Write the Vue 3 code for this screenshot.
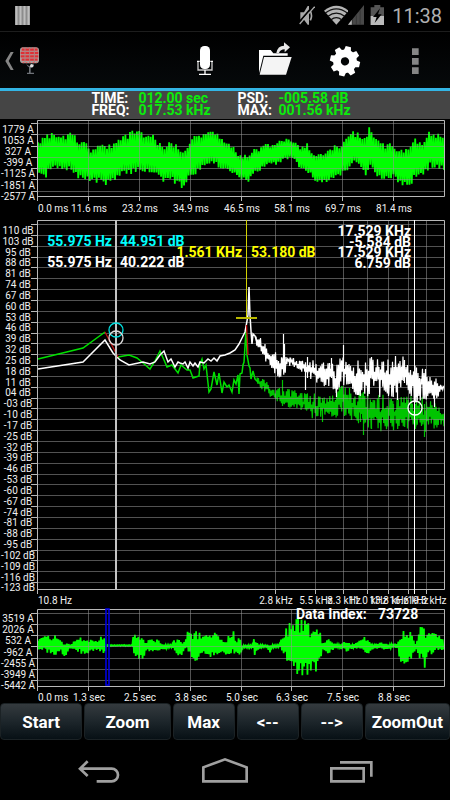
<template>
  <div class="screen">
    <header class="status-bar">
      <svg class="bars" width="16" height="22" viewBox="0 0 16 22">
        <rect y="1" width="15" height="19" fill="#8c8c8c" />
        <path d="M1.5 1v19M5.5 1v19M9.5 1v19M13.5 1v19" stroke="#bdbdbd" stroke-width="2" />
      </svg>
      <svg class="mute" width="16" height="22" viewBox="225 15 48 66">
        <path d="M229 37h11l11-19h4v56h-4l-11-15h-11z" fill="#aaa" />
        <path d="M259 33q7 14 0 28" fill="none" stroke="#aaa" stroke-width="5" />
        <path d="M224 68L268 17" stroke="#000" stroke-width="5" />
        <path d="M227 72L272 20" stroke="#aaa" stroke-width="4" />
      </svg>
      <svg width="24" height="22" viewBox="300 15 72 66">
        <path d="M337 74L300 32Q337 3 374 32z" fill="#b4b4b4" />
        <path d="M304 39q33-25 66 0M312 49q25-19 50 0M321 59q16-12 32 0" fill="none" stroke="#111" stroke-width="4" />
      </svg>
      <svg class="signal" width="16" height="22" viewBox="370 15 50 66">
        <path d="M370 75L420 14V75z" fill="#484848" />
        <path d="M370 75L382 60V75z" fill="#b4b4b4" />
        <path d="M384 60v15M396 46v29M408 30v45" stroke="#2c2c2c" stroke-width="2" />
      </svg>
      <svg width="15" height="22" viewBox="438 15 45 66">
        <path d="M440 22h11v-7h18v7h11v53h-40z" fill="#555" />
        <path d="M440 48h40v27h-40z" fill="#bbb" />
        <path d="M468 25L447 51h11l-6 18 21-26h-11z" fill="#000" />
      </svg>
      <time class="clock">11:38</time>
    </header>

    <nav class="action-bar">
      <button class="up" aria-label="Back">
        <svg width="12" height="36" viewBox="12 126 36 108">
          <path d="M41 156h-9L16 183l16 27h9L26 183z" fill="#858585" />
        </svg>
        <svg width="22" height="36" viewBox="54 126 66 108">
          <rect x="60" y="142" width="57" height="48" rx="9" fill="#aaa09e" />
          <path d="M65 149h48M62 159h53M62 169h53M65 179h48" stroke="#df2f35" stroke-width="7" />
          <path d="M75 143v46M89 143v46M103 143v46" stroke="#b08080" stroke-width="3" />
          <path d="M66 144h46M68 188h42" stroke="#ef5050" stroke-width="3" stroke-dasharray="4 6" />
          <path d="M79 192q10 12 23 0v6q-4 6-10 6v14h10v4H81v-4h6v-16q-6-3-8-10z" fill="#6e7278" />
          <circle cx="95" cy="197" r="5" fill="#ddd" />
        </svg>
      </button>
      <button class="action" aria-label="Record">
        <svg width="36" height="36" viewBox="561 126 108 108">
          <rect x="600" y="138" width="30" height="69" rx="13" fill="#fff" />
          <path d="M594 183v27h42v-27" fill="none" stroke="#ccc" stroke-width="4" />
          <path d="M591 184h8M631 184h8M597 223h36M615 210v12" stroke="#fff" stroke-width="4" />
        </svg>
      </button>
      <button class="action" aria-label="Open file">
        <svg width="36" height="36" viewBox="99 126 108 108">
          <path d="M105 150h35l8 10h43v7h-73l-13 53z" fill="#fff" />
          <path d="M120 171h83l-17 53h-79z" fill="#f4f4f4" />
          <path d="M157 159q4-22 23-22v-10l18 15-16 15v-9q-13 0-17 11z" fill="#e8e8e8" />
        </svg>
      </button>
      <button class="action" aria-label="Settings">
        <svg width="36" height="36" viewBox="306 126 108 108">
          <g transform="translate(360 184) rotate(13)" fill="#fff">
            <path v-for="n in 8" :key="n" d="M-11-30L-8-45H8L11-30z" :transform="`rotate(${n * 45})`" />
            <circle r="24" fill="none" stroke="#fff" stroke-width="23" />
          </g>
        </svg>
      </button>
      <button class="action" aria-label="More">
        <svg width="36" height="36" viewBox="516 126 108 108">
          <path d="M561 145h20v20h-20zM561 174h20v20h-20zM561 202h20v20h-20z" fill="#858585" />
        </svg>
      </button>
    </nav>

    <dl class="readout">
      <template v-for="item in readout" :key="item.label">
        <dt>{{ item.label }}</dt>
        <dd>{{ item.value }}</dd>
      </template>
    </dl>

    <main>
      <svg class="chart" viewBox="0 0 450 99">
        <path class="trace" :d="wavePath" />
        <path class="grid" :d="gridPath(waveRows, waveCols, 1, 77)" />
        <path class="frame" :d="framePath(1, 77, waveRows, waveCols)" />
        <text v-for="(label, i) in waveLevels" :key="label" class="tick mid" x="18" :y="14 + Math.round(i * 11.1)">{{ label }}</text>
        <text class="tick" x="38" y="93">0.0 ms</text>
        <text v-for="(label, i) in waveTimes" :key="label" class="tick mid" :x="waveCols[i] + 1" y="93">{{ label }}</text>
      </svg>

      <svg class="chart" viewBox="0 0 450 389">
        <path class="trace noise" :d="greenNoise" />
        <path class="grid" :d="gridPath(specRows, specCols, 2, 371)" />
        <path class="trace spectrum" :d="greenLine" />
        <path class="white" :d="whiteNoise" />
        <path class="white line" :d="whiteLine" />
        <path d="M105 114L118 139M246.500 107L248 137" class="peak" />
        <path class="frame" :d="framePath(2, 371, specRows, specCols)" />

        <path d="M116 2V371" stroke="#c4c4c4" stroke-width="2" />
        <path d="M414.500 2V376" stroke="#fff" />
        <path d="M246.500 2V99" stroke="#d2d200" />
        <path d="M236 100H257" stroke="#b9b900" stroke-width="2" />
        <circle cx="116" cy="112" r="7" stroke="#00dede" />
        <circle cx="116" cy="120" r="7" stroke="#ddd" />
        <circle cx="415" cy="190" r="7" stroke="#fff" />

        <g class="marker cyan">
          <text class="end" x="112" y="28">55.975 Hz</text>
          <text x="120" y="28">44.951 dB</text>
        </g>
        <g class="marker">
          <text class="end" x="112" y="49">55.975 Hz</text>
          <text x="120" y="49">40.222 dB</text>
        </g>
        <g class="marker yellow">
          <text class="end" x="242" y="39">1.561 KHz</text>
          <text x="251" y="39">53.180 dB</text>
        </g>
        <g class="marker end">
          <text x="411" y="18">17.529 KHz</text>
          <text x="411" y="29">-5.584 dB</text>
          <text x="411" y="39">17.529 KHz</text>
          <text x="411" y="50">6.759 dB</text>
        </g>

        <text v-for="(label, i) in specLevels" :key="label" class="tick mid" x="18" :y="16 + Math.round(i * 10.83)">{{ label }} dB</text>
        <text class="tick" x="38" y="386">10.8 Hz</text>
        <text v-for="(label, i) in specFreqs" :key="label" class="tick mid" :x="specCols[i] + 1" y="386">{{ label }} kHz</text>
      </svg>

      <svg class="chart" viewBox="0 0 450 95">
        <path class="trace" :d="overviewPath" />
        <path class="grid" :d="gridPath(overRows, waveCols, 2, 79)" />
        <path class="frame" :d="framePath(2, 79, overRows, waveCols)" />
        <rect x="106" y="2" width="3" height="76" fill="none" stroke="#0000e0" stroke-width="1.6" />
        <g class="marker">
          <text x="296" y="12">Data Index:</text>
          <text x="378" y="12">73728</text>
        </g>
        <text v-for="(label, i) in overLevels" :key="label" class="tick mid" x="18" :y="15 + Math.round(i * 11.2)">{{ label }}</text>
        <text class="tick" x="38" y="94">0.0 ms</text>
        <text v-for="(label, i) in overTimes" :key="label" class="tick mid" :x="waveCols[i] + 1" y="94">{{ label }}</text>
      </svg>
    </main>

    <div class="controls">
      <button v-for="c in controls" :key="c.label" :style="{ flexGrow: c.size }">{{ c.label }}</button>
    </div>

    <nav class="system-nav">
      <button aria-label="Back">
        <svg width="46" height="30" viewBox="231 180 138 90">
          <path d="M266 199L243 221L266 243M243 221H338a19 19 0 0 1 0 38H293" />
        </svg>
      </button>
      <button aria-label="Home">
        <svg width="46" height="30" viewBox="606 180 138 90">
          <path d="M610 259V217L675 193L740 217V259z" />
        </svg>
      </button>
      <button aria-label="Recent apps">
        <svg width="46" height="30" viewBox="309 180 138 90">
          <path d="M319 220h97v39h-97zM345 202h94v43" />
        </svg>
      </button>
    </nav>
  </div>
</template>

<script setup>
const readout = [
  { label: 'TIME:', value: '012.00 sec' },
  { label: 'PSD:', value: '-005.58 dB' },
  { label: 'FREQ:', value: '017.53 kHz' },
  { label: 'MAX:', value: '001.56 kHz' },
]

const controls = [
  { label: 'Start', size: 83 },
  { label: 'Zoom', size: 87 },
  { label: 'Max', size: 62 },
  { label: '<--', size: 62 },
  { label: '-->', size: 62 },
  { label: 'ZoomOut', size: 86 },
]

const LEFT = 37
const RIGHT = 444

const waveLevels = ['1779 A', '1053 A', '327 A', '-399 A', '-1125 A', '-1851 A', '-2577 A']
const waveTimes = ['11.6 ms', '23.2 ms', '34.9 ms', '46.5 ms', '58.1 ms', '69.7 ms', '81.4 ms']
const waveRows = [4, 15, 27, 38, 49, 60, 72]
const waveCols = [88, 139, 190, 241, 291, 342, 393]

const specLevels = [
  '110', '103', '95', '88', '81', '74', '67', '60', '53', '46', '39', '32', '25', '18', '11', '04',
  '-03', '-10', '-17', '-25', '-32', '-39', '-46', '-53', '-60', '-67', '-74', '-81', '-88', '-95',
  '-102', '-109', '-116', '-123',
]
const specFreqs = ['2.8', '5.5', '8.3', '11.0', '13.8', '16.6', '19.3']
const specRows = specLevels.map((_, i) => 6 + Math.round(i * 10.85))
const specCols = [275, 315, 343, 367, 388, 408, 426]

const overLevels = ['3519 A', '2026 A', '532 A', '-962 A', '-2455 A', '-3949 A', '-5442 A']
const overTimes = ['1.3 sec', '2.5 sec', '3.8 sec', '5.0 sec', '6.3 sec', '7.5 sec', '8.8 sec']
const overRows = [6, 17, 28, 39, 51, 62, 73]

const gridPath = (rows, cols, top, bottom) =>
  rows.map(y => `M${LEFT} ${y + 0.5}H${RIGHT}`).join('') +
  cols.map(x => `M${x + 0.5} ${top}V${bottom}`).join('')

const framePath = (top, bottom, rows, cols) =>
  `M${LEFT + 0.5} ${bottom + 5}V${top + 0.5}H${RIGHT + 0.5}V${bottom + 0.5}H${LEFT}` +
  rows.map(y => `M31 ${y + 0.5}H${LEFT}`).join('') +
  cols.map(x => `M${x + 0.5} ${bottom}v5`).join('')

// small LCG so every trace is drawn the same way each time
const makeRandom = (seed) => () => {
  seed = (seed * 1664525 + 1013904223) % 4294967296
  return seed / 4294967296
}

// envelope points: [x, top, bottom]
const envelopeAt = (points, x) => {
  let i = 1
  while (i < points.length - 1 && points[i][0] < x) i++
  const [x0, t0, b0] = points[i - 1]
  const [x1, t1, b1] = points[i]
  const k = Math.min(1, Math.max(0, (x - x0) / (x1 - x0)))
  return [t0 + (t1 - t0) * k, b0 + (b1 - b0) * k]
}

const zigzag = (points, step, jitter, seed) => {
  const random = makeRandom(seed)
  const out = []
  const end = points[points.length - 1][0]
  for (let x = points[0][0]; x < end; x += step) {
    const [top, bottom] = envelopeAt(points, x)
    const slack = (bottom - top) * jitter
    out.push(`${x} ${(top + random() * slack).toFixed(1)}`)
    out.push(`${x + step / 2} ${(bottom - random() * slack).toFixed(1)}`)
  }
  return 'M' + out.join('L')
}

const spikes = (list) => list.map(([x, a, b]) => `M${x + 0.5} ${a}V${b}`).join('')
const polyline = (points) => 'M' + points.map(p => p.join(' ')).join('L')

const wavePath = zigzag([
  [38, 22, 59], [42, 19, 62], [52, 11, 51], [62, 17, 53], [72, 12, 54], [80, 22, 63], [86, 20, 62],
  [89, 29, 63], [95, 28, 65], [100, 23, 64], [104, 26, 66], [112, 24, 65], [120, 16, 59],
  [127, 14, 56], [133, 9, 55], [139, 9, 53], [144, 13, 54], [153, 15, 56], [158, 21, 61],
  [164, 26, 64], [172, 21, 65], [179, 25, 70], [183, 28, 68], [187, 24, 62], [193, 17, 56],
  [201, 16, 52], [210, 9, 43], [217, 12, 49], [225, 20, 51], [232, 26, 56], [239, 35, 61],
  [248, 36, 63], [254, 30, 56], [261, 28, 51], [267, 24, 46], [273, 26, 46], [279, 21, 45],
  [285, 19, 40], [293, 21, 42], [300, 27, 51], [307, 24, 56], [312, 31, 60], [320, 33, 67],
  [326, 32, 64], [333, 26, 61], [340, 25, 57], [346, 18, 52], [353, 12, 46], [360, 14, 49],
  [365, 17, 58], [369, 8, 48], [375, 14, 57], [384, 24, 63], [392, 23, 60], [399, 28, 66],
  [404, 29, 69], [410, 29, 68], [414, 19, 60], [423, 22, 56], [429, 12, 49], [437, 14, 51],
  [444, 18, 53],
], 2.3, 0.16, 7)

const overviewPath = zigzag([
  [38, 33, 43], [42, 29, 44], [48, 28, 47], [55, 28, 50], [60, 31, 45], [64, 35, 51], [68, 36, 42],
  [72, 36, 43], [75, 32, 43], [82, 29, 49], [88, 32, 46], [95, 33, 43], [104, 28, 48], [105, 38, 39],
  [132, 38, 39], [133, 27, 47], [138, 28, 54], [143, 31, 54], [146, 37, 42], [150, 29, 46],
  [155, 35, 44], [158, 31, 46], [165, 38, 42], [172, 38, 40], [175, 31, 48], [180, 32, 50],
  [185, 34, 42], [188, 20, 50], [192, 28, 52], [195, 24, 56], [200, 25, 53], [206, 28, 47],
  [212, 24, 54], [218, 28, 46], [225, 31, 49], [230, 28, 50], [233, 22, 48], [236, 34, 44],
  [239, 26, 52], [242, 38, 41], [252, 38, 41], [254, 30, 49], [258, 37, 42], [266, 38, 40],
  [269, 38, 48], [271, 38, 41], [279, 38, 40], [282, 28, 47], [287, 20, 57], [292, 12, 64],
  [298, 10, 71], [305, 12, 71], [310, 16, 67], [315, 18, 65], [320, 21, 61], [322, 35, 44],
  [328, 29, 48], [334, 37, 41], [340, 36, 42], [347, 33, 45], [352, 38, 41], [358, 33, 43],
  [362, 30, 43], [367, 30, 49], [373, 38, 41], [380, 35, 43], [392, 37, 41], [397, 36, 42],
  [400, 25, 59], [406, 23, 56], [412, 24, 50], [415, 37, 41], [418, 28, 52], [421, 16, 58],
  [425, 22, 63], [428, 18, 48], [433, 23, 49], [437, 28, 43], [440, 28, 47], [444, 32, 46],
], 1.7, 0.28, 21)

const greenLine = polyline([[38, 141], [83, 130], [105, 114]]) + polyline([
  [118, 139], [129, 137], [137, 140], [143, 145], [150, 151], [155, 143], [160, 133], [164, 142],
  [167, 149], [172, 147], [178, 155], [181, 147], [187, 152], [190, 152], [193, 160], [199, 158],
  [200, 146], [202, 141], [204, 151], [206, 147], [209, 174], [211, 171], [214, 154], [217, 167],
  [219, 155], [222, 175], [224, 164], [227, 169], [229, 167], [232, 174], [234, 162], [236, 166],
  [238, 157], [239, 176], [240, 156], [242, 155], [243, 147], [244, 144], [246, 112], [247, 137],
  [249, 148], [250, 150], [251, 161], [253, 153], [255, 161], [258, 164],
])

const greenNoise = zigzag([
  [257, 158, 170], [265, 162, 175], [275, 168, 184], [285, 169, 190], [300, 174, 194],
  [315, 175, 203], [325, 178, 197], [335, 175, 203], [341, 164, 198], [350, 172, 202],
  [360, 173, 208], [370, 174, 212], [385, 177, 214], [400, 176, 214], [414, 176, 216],
  [425, 180, 216], [435, 184, 210], [440, 189, 212], [444, 195, 208],
], 1.4, 0.48, 5) + spikes([
  [282, 162, 188], [322, 180, 204], [341, 168, 190], [349, 170, 192], [360, 175, 204],
  [363, 180, 217], [371, 184, 211], [393, 186, 208], [415, 186, 211], [424, 186, 219],
])

const whiteLine = polyline([
  [38, 151], [83, 144], [105, 122], [113, 135], [120, 142], [129, 147], [143, 144], [150, 146],
  [155, 144], [160, 137], [164, 133], [168, 144], [171, 141], [175, 149], [178, 144], [180, 145],
  [183, 146], [185, 144], [188, 150], [190, 144], [193, 148], [195, 145], [198, 149], [200, 144],
  [204, 145], [208, 141], [211, 143], [214, 140], [217, 143], [220, 138], [225, 137], [230, 135],
  [235, 132], [239, 126], [242, 120], [245, 114], [247, 103], [248, 97], [249, 69], [250, 97],
  [251, 113], [252, 126], [253, 116], [255, 118], [257, 124],
])

const whiteNoise = zigzag([
  [256, 117, 129], [262, 121, 138], [268, 125, 151], [275, 129, 156], [278, 137, 164],
  [283, 134, 164], [286, 135, 147], [295, 140, 151], [305, 143, 157], [315, 142, 168],
  [325, 143, 172], [330, 138, 171], [336, 148, 179], [341, 132, 170], [346, 138, 172],
  [355, 143, 178], [365, 141, 180], [372, 138, 176], [385, 141, 182], [393, 134, 179],
  [400, 142, 180], [404, 136, 176], [412, 144, 184], [418, 150, 186], [421, 146, 182],
  [430, 153, 183], [437, 160, 182], [440, 166, 174], [444, 169, 170],
], 1.5, 0.45, 99) + spikes([
  [283, 116, 145], [284, 126, 146], [305, 150, 172], [307, 139, 160], [336, 160, 179],
  [343, 127, 160], [331, 140, 160], [357, 155, 177], [388, 160, 178], [397, 160, 182],
  [404, 142, 165], [416, 160, 179], [434, 165, 189],
])
</script>

<style>
body {
  margin: 0;
  background: #000;
}
</style>

<style scoped>
.screen {
  min-height: 100vh;
  display: flex;
  flex-direction: column;
  background: #000;
  color: #fff;
  font-family: Roboto, "Liberation Sans", sans-serif;
}

button {
  padding: 0;
  border: 0;
  background: none;
  color: inherit;
  font: inherit;
}

svg {
  display: block;
}

.status-bar {
  display: flex;
  align-items: center;
  height: 31px;
  padding: 0 8px 0 15px;
  border-bottom: 1px solid #1d1d1d;
}

.mute {
  margin: 0 9px 0 auto;
}

.signal {
  margin-right: 6px;
}

.clock {
  margin-left: 7px;
  color: #b0b0b0;
  font-size: 20px;
  line-height: 24px;
}

.action-bar {
  display: flex;
  height: 56px;
  background: linear-gradient(#000, #06090b);
  border-bottom: 3px solid #33b5e5;
}

.up {
  display: flex;
  align-items: center;
  gap: 2px;
  margin-right: auto;
  padding-left: 4px;
}

.action {
  display: flex;
  align-items: center;
  justify-content: center;
  width: 70px;
}

.readout {
  display: grid;
  grid-template-columns: 47px 99px 41px auto;
  justify-content: center;
  height: 24px;
  margin: 0;
  padding: 1px 8px 3px 0;
  background: #454545;
  font-size: 14px;
  font-weight: 700;
  line-height: 12px;
}

.readout dd {
  margin: 0;
  color: #0beb0b;
}

.chart {
  width: 100%;
}

.chart path,
.chart circle {
  fill: none;
}

.trace {
  stroke: #0f0;
  stroke-width: 1.8;
}

.noise {
  stroke: #00c400;
  stroke-width: 1.2;
}

.spectrum {
  stroke: #00e000;
  stroke-width: 1.5;
}

.white {
  stroke: #fff;
  stroke-width: 1.2;
}

.line {
  stroke-width: 1.5;
}

.peak {
  stroke: #c01010;
  stroke-width: 1.3;
}

.chart circle {
  stroke-width: 1.3;
}

.grid {
  stroke: rgba(150, 150, 150, 0.55);
}

.frame {
  stroke: #b8b8b8;
}

.tick {
  fill: #f0f0f0;
  font-size: 10px;
}

.mid {
  text-anchor: middle;
}

.end {
  text-anchor: end;
}

.marker {
  fill: #fff;
  font-size: 14px;
  font-weight: 700;
}

.cyan {
  fill: #0ff;
}

.yellow {
  fill: #ff0;
}

.controls {
  display: flex;
  gap: 2px;
  padding-top: 1px;
}

.controls button {
  flex: 1 1 0;
  min-width: 0;
  height: 37px;
  border: 1px solid #1b2225;
  border-radius: 4px;
  background: linear-gradient(#343a3e, #1d262b 50%, #071015);
  font-size: 17px;
  font-weight: 700;
}

.system-nav {
  display: flex;
  justify-content: center;
  height: 60px;
}

.system-nav button {
  display: flex;
  align-items: center;
  justify-content: center;
  width: 28%;
}

.system-nav path {
  fill: none;
  stroke: #a0a0a0;
  stroke-width: 8;
}
</style>
